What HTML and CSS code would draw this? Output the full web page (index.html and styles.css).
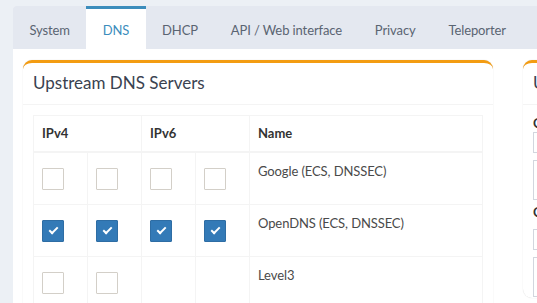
FILE: index.html
```html
<!DOCTYPE html>
<html lang="en">
<head>
  <meta charset="UTF-8" />
  <title>Settings - DNS</title>
  <link rel="stylesheet" href="styles.css">
</head>
<body>
  <div class="page">
    <div class="tabs-panel">
      <ul class="tabs">
        <li>System</li>
        <li class="active">DNS</li>
        <li>DHCP</li>
        <li>API / Web interface</li>
        <li>Privacy</li>
        <li>Teleporter</li>
      </ul>

      <div class="tab-content">
        <div class="box">
          <div class="box-header">Upstream DNS Servers</div>
          <div class="box-body">
            <table class="servers">
              <thead>
                <tr>
                  <th colspan="2">IPv4</th>
                  <th colspan="2">IPv6</th>
                  <th>Name</th>
                </tr>
              </thead>
              <tbody>
                <tr>
                  <td class="cb"><span class="check"></span></td>
                  <td class="cb"><span class="check"></span></td>
                  <td class="cb"><span class="check"></span></td>
                  <td class="cb"><span class="check"></span></td>
                  <td class="name">Google (ECS, DNSSEC)</td>
                </tr>
                <tr>
                  <td class="cb"><span class="check on"></span></td>
                  <td class="cb"><span class="check on"></span></td>
                  <td class="cb"><span class="check on"></span></td>
                  <td class="cb"><span class="check on"></span></td>
                  <td class="name">OpenDNS (ECS, DNSSEC)</td>
                </tr>
                <tr>
                  <td class="cb"><span class="check"></span></td>
                  <td class="cb"><span class="check"></span></td>
                  <td class="cb"></td>
                  <td class="cb"></td>
                  <td class="name">Level3</td>
                </tr>
              </tbody>
            </table>
          </div>
        </div>

        <div class="box side">
          <div class="box-header">Upstream DNS Servers</div>
          <div class="box-body">
            <div class="field">
              <div class="field-label">Custom 1 (IPv4)</div>
              <span class="addon"></span>
              <div class="field-input"></div>
            </div>
            <div class="field">
              <div class="field-label">Custom 2 (IPv4)</div>
              <span class="addon"></span>
              <div class="field-input"></div>
            </div>
          </div>
        </div>
      </div>
    </div>
  </div>
</body>
</html>
```

FILE: styles.css
```css
html, body {
  margin: 0;
  padding: 0;
  background: #ecf0f5;
  color: #444;
  font-family: Lato, "Liberation Sans", sans-serif;
  font-size: 13px;
  width: 537px;
  height: 303px;
  overflow: hidden;
}

.page {
  padding: 6px 0 0 13px;
}

.tabs-panel {
  background: #fff;
  width: 1100px;
  border-radius: 3px 0 0 0;
}

.tabs {
  display: flex;
  margin: 0;
  padding: 0;
  list-style: none;
  background: #e4e8f0;
  height: 43px;
  border-radius: 3px 0 0 0;
}

.tabs li {
  padding: 0 16.4px;
  line-height: 43px;
  border-top: 3px solid transparent;
  color: #5a6472;
  box-sizing: border-box;
  height: 43px;
  letter-spacing: -0.1px;
}

.tabs li.active {
  background: #fff;
  border-top-color: #3c8dbc;
  color: #3c8dbc;
}

.tab-content {
  display: flex;
  gap: 30px;
  padding: 11px 10px 0;
}

.box {
  width: 470px;
  flex-shrink: 0;
  background: #fff;
  border-top: 3px solid #f39c12;
  border-radius: 9px;
  box-shadow: 0 0 1px rgba(0, 0, 0, 0.2);
  height: 300px;
}

.box.side {
  height: 235px;
  overflow: hidden;
}

.box-header {
  font-size: 17px;
  line-height: 20px;
  padding: 10px 10px 11px;
  border-bottom: 1px solid #f4f4f4;
  color: #3a4250;
}

.box-body {
  padding: 10px;
}

.servers {
  border-collapse: collapse;
  width: 450px;
  border: 1px solid #f4f4f4;
}

.servers th,
.servers td {
  border: 1px solid #f4f4f4;
  padding: 8px;
  vertical-align: top;
  text-align: left;
}

.servers th {
  font-weight: bold;
  color: #333;
  line-height: 19px;
  border-bottom-width: 2px;
}

.servers td.cb {
  width: 37px;
  height: 35px;
}

.servers td.name {
  line-height: 20px;
  color: #4a4a4a;
  letter-spacing: -0.1px;
}

.check {
  display: block;
  width: 20px;
  height: 20px;
  margin-top: 7px;
  border: 1px solid #d3cfc8;
  background: #fff;
  border-radius: 1px;
  position: relative;
}

.check.on {
  background: #337ab7;
  border-color: #2e6da4;
}

.check.on::after {
  content: "";
  position: absolute;
  left: 6px;
  top: 6px;
  width: 7px;
  height: 3px;
  border-left: 2px solid #fff;
  border-bottom: 2px solid #fff;
  transform: rotate(-45deg);
}

.field + .field {
  margin-top: 4px;
}

.field-label {
  font-weight: bold;
  color: #333;
  line-height: 17px;
}

.field + .field .addon {
  margin-top: 8px;
}

.addon {
  display: block;
  width: 30px;
  height: 19px;
  border: 1px solid #d2d6de;
}

.field-input {
  margin-top: 7px;
  width: 300px;
  height: 38px;
  border: 1px solid #d2d6de;
}
```
